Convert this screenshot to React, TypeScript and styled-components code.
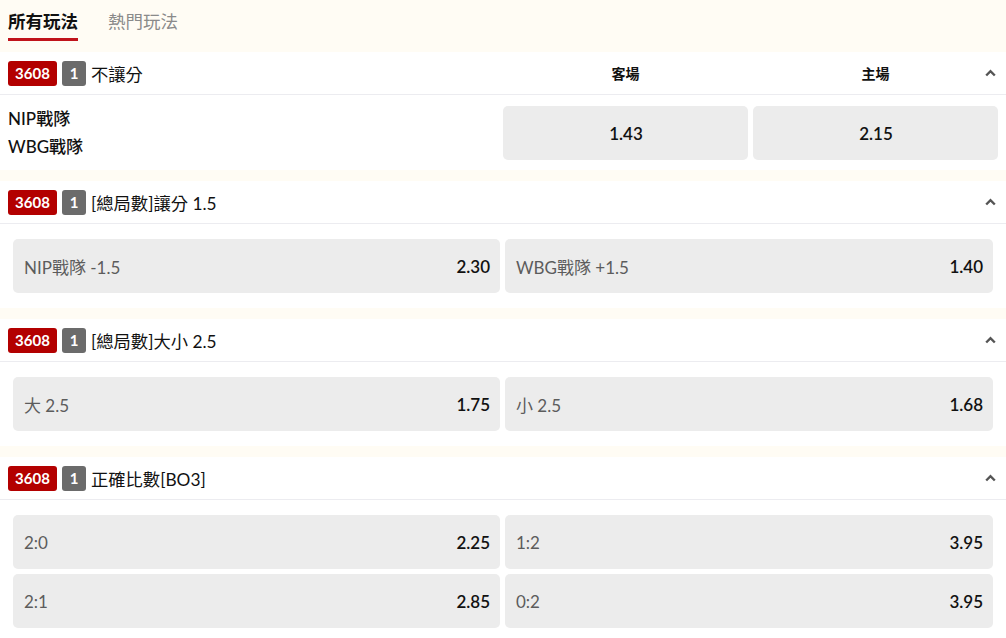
import React from "react";
import styled, { createGlobalStyle } from "styled-components";

const Global = createGlobalStyle`
  html, body { margin: 0; padding: 0; background: #fffcf4; }
  body { font-family: Lato, "Noto Sans CJK TC", sans-serif; color: #111; }
  * { box-sizing: border-box; }
`;

const Page = styled.div`
  width: 1006px;
  background: #fffcf4;
  display: flex;
  flex-direction: column;
`;

const Tabs = styled.div`
  height: 52px;
  display: flex;
  gap: 30px;
  padding: 0 8px;
  background: #fffcf4;
`;

const Tab = styled.div<{ $active?: boolean }>`
  position: relative;
  padding-top: 10px;
  font-size: 17.5px;
  line-height: 24px;
  height: 41px;
  font-weight: ${(p) => (p.$active ? 700 : 400)};
  color: ${(p) => (p.$active ? "#111" : "#8a8a8a")};
  border-bottom: 3px solid ${(p) => (p.$active ? "#c0131b" : "transparent")};
`;

const Section = styled.section<{ $first?: boolean }>`
  background: #fff;
  margin-top: ${(p) => (p.$first ? "0" : "11px")};
`;

const Header = styled.div`
  position: relative;
  height: 43px;
  border-bottom: 1px solid #ececf0;
  display: grid;
  grid-template-columns: 1fr 245px 245px;
  column-gap: 5px;
  align-items: center;
  padding: 0 8px;
`;

const TitleWrap = styled.div`
  display: flex;
  align-items: center;
  gap: 5px;
`;

const Badge = styled.span<{ $gray?: boolean }>`
  display: inline-flex;
  align-items: center;
  justify-content: center;
  height: 25px;
  min-width: ${(p) => (p.$gray ? "24px" : "49px")};
  padding: 0 4px;
  border-radius: 3px;
  background: ${(p) => (p.$gray ? "#6b6b6b" : "#b30000")};
  color: #fff;
  font-weight: 700;
  font-size: 15px;
`;

const Title = styled.span`
  font-size: 17.3px;
  color: #111;
  white-space: nowrap;
`;

const ColHead = styled.div`
  text-align: center;
  font-size: 14px;
  font-weight: 700;
  color: #111;
`;

const Chevron = styled.span`
  position: absolute;
  right: 10px;
  top: 50%;
  transform: translateY(-50%);
  display: flex;
`;

const MatchBody = styled.div`
  display: grid;
  grid-template-columns: 1fr 245px 245px;
  column-gap: 5px;
  padding: 10px 8px 9px;
  align-items: center;
`;

const Teams = styled.div`
  display: flex;
  flex-direction: column;
  font-size: 17px;
  font-weight: 500;
  line-height: 28px;
  color: #111;
`;

const Body = styled.div`
  display: grid;
  grid-template-columns: 487px 488px;
  column-gap: 5px;
  row-gap: 5px;
  padding: 15px 13px 15px;
`;

const Odd = styled.div<{ $center?: boolean }>`
  height: 54px;
  background: #ececec;
  border-radius: 5px;
  display: flex;
  align-items: center;
  justify-content: ${(p) => (p.$center ? "center" : "space-between")};
  padding: 0 10px 0 11px;
  font-size: 17px;
`;

const Label = styled.span`
  color: #5c5c5c;
`;

const Price = styled.span`
  color: #111;
  font-weight: 600;
`;

const ChevronIcon = () => (
  <svg width="11" height="8" viewBox="0 0 11 8">
    <path d="M1.2 6.5 L5.5 2.2 L9.8 6.5" fill="none" stroke="#555" strokeWidth="2.4" />
  </svg>
);

const SectionHeader: React.FC<{ title: string; cols?: string[] }> = ({ title, cols }) => (
  <Header>
    <TitleWrap>
      <Badge>3608</Badge>
      <Badge $gray>1</Badge>
      <Title>{title}</Title>
    </TitleWrap>
    {cols ? cols.map((c) => <ColHead key={c}>{c}</ColHead>) : null}
    <Chevron>
      <ChevronIcon />
    </Chevron>
  </Header>
);

const markets: { title: string; odds: [string, string][] }[] = [
  { title: "[總局數]讓分 1.5", odds: [["NIP戰隊 -1.5", "2.30"], ["WBG戰隊 +1.5", "1.40"]] },
  { title: "[總局數]大小 2.5", odds: [["大 2.5", "1.75"], ["小 2.5", "1.68"]] },
  {
    title: "正確比數[BO3]",
    odds: [["2:0", "2.25"], ["1:2", "3.95"], ["2:1", "2.85"], ["0:2", "3.95"]],
  },
];

export default function App() {
  return (
    <Page>
      <Global />
      <Tabs>
        <Tab $active>所有玩法</Tab>
        <Tab>熱門玩法</Tab>
      </Tabs>
      <Section $first>
        <SectionHeader title="不讓分" cols={["客場", "主場"]} />
        <MatchBody>
          <Teams>
            <span>NIP戰隊</span>
            <span>WBG戰隊</span>
          </Teams>
          <Odd $center>
            <Price>1.43</Price>
          </Odd>
          <Odd $center>
            <Price>2.15</Price>
          </Odd>
        </MatchBody>
      </Section>
      {markets.map((m) => (
        <Section key={m.title}>
          <SectionHeader title={m.title} />
          <Body>
            {m.odds.map(([l, p]) => (
              <Odd key={l}>
                <Label>{l}</Label>
                <Price>{p}</Price>
              </Odd>
            ))}
          </Body>
        </Section>
      ))}
    </Page>
  );
}
